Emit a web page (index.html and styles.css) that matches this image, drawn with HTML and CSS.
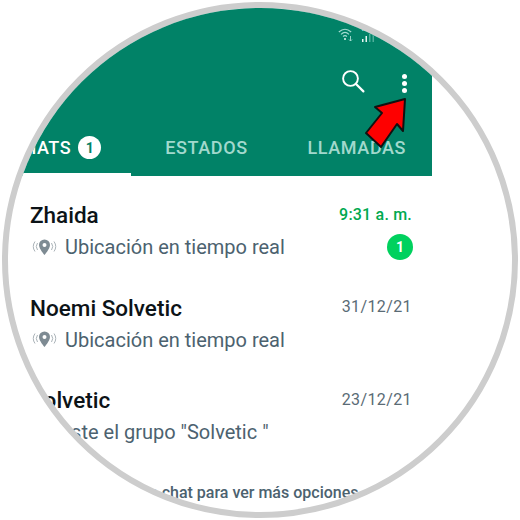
FILE: index.html
```html
<!DOCTYPE html>
<html lang="es">
<head>
<meta charset="utf-8">
<title>Chats</title>
<link rel="stylesheet" href="styles.css">
</head>
<body>
<main class="lens">
  <div class="screen">
    <header class="appbar">
      <div class="status">
        <svg class="wifi" width="18" height="16" viewBox="0 0 16 16" fill="none" stroke="#a5dcd2" stroke-width="1.1">
          <path d="M0.8 5 Q7 -0.5 13.2 5"/>
          <path d="M3 7.3 Q7 3.6 11 7.3"/>
          <path d="M5 9.5 Q7 7.8 9 9.5"/>
          <circle cx="7" cy="12" r="1" fill="#e6f5f2" stroke="none"/>
          <path d="M12.5 9v5M11 12.5l1.5 1.5 1.5-1.5" stroke-width="0.9"/>
        </svg>
        <div class="signal">
          <span class="roam">R</span>
          <svg width="14" height="10" viewBox="0 0 14 10">
            <rect x="0" y="7" width="1.5" height="3" fill="#e6f5f2"/>
            <rect x="3.5" y="4" width="1.5" height="6" fill="#e6f5f2"/>
            <rect x="7" y="2" width="1.5" height="8" fill="#4fae9b"/>
            <rect x="10.5" y="0" width="1.5" height="10" fill="#4fae9b"/>
          </svg>
        </div>
      </div>
      <div class="toolbar">
        <svg class="search" width="26" height="26" viewBox="0 0 26 26" fill="none" stroke="#fff" stroke-width="1.9" stroke-linecap="round">
          <circle cx="10.5" cy="10.5" r="7.4"/>
          <path d="M16 16l7.4 7.4" stroke-width="2.2"/>
        </svg>
        <div class="menu">
          <span class="dot"></span><span class="dot"></span><span class="dot"></span>
          <svg class="arrow" width="46" height="54" viewBox="0 0 46 54">
            <path d="M41 2 L11 10 L18 16 L2 36 L17 50 L33 27 L39 34 Z" fill="#fe0000" stroke="#111" stroke-width="2" stroke-linejoin="round"/>
          </svg>
        </div>
      </div>
      <nav class="tabs">
        <div class="tab tab-active">CHATS <span class="tab-count">1</span></div>
        <div class="tab">ESTADOS</div>
        <div class="tab">LLAMADAS</div>
      </nav>
    </header>

    <section class="chat">
      <div class="chat-line">
        <span class="name">Zhaida</span>
        <span class="time time-new">9:31 a. m.</span>
      </div>
      <div class="chat-line">
        <span class="preview">
          <svg class="live" width="27" height="18" viewBox="0 0 27 18" fill="none" stroke="#aab3b8" stroke-width="1">
            <path d="M4 3.5 Q0.5 8.5 4 13.5"/>
            <path d="M6.5 5 Q4 8.5 6.5 12"/>
            <path d="M20.5 5 Q23 8.5 20.5 12"/>
            <path d="M23 3.5 Q26.5 8.5 23 13.5"/>
            <path fill="#7e8b93" stroke="none" fill-rule="evenodd" d="M13.5 1.5a5.5 5.5 0 0 1 5.5 5.5c0 3.8-5.5 10-5.5 10S8 10.800 8 7a5.500 5.500 0 0 1 5.500-5.500zm0 3.500a2 2 0 1 0 0 4 2 2 0 0 0 0-4z"/>
          </svg>
          Ubicación en tiempo real
        </span>
        <span class="unread">1</span>
      </div>
    </section>

    <section class="chat">
      <div class="chat-line">
        <span class="name">Noemi Solvetic</span>
        <span class="time">31/12/21</span>
      </div>
      <div class="chat-line">
        <span class="preview">
          <svg class="live" width="27" height="18" viewBox="0 0 27 18" fill="none" stroke="#aab3b8" stroke-width="1">
            <path d="M4 3.5 Q0.5 8.5 4 13.5"/>
            <path d="M6.5 5 Q4 8.5 6.5 12"/>
            <path d="M20.5 5 Q23 8.5 20.5 12"/>
            <path d="M23 3.5 Q26.5 8.5 23 13.5"/>
            <path fill="#7e8b93" stroke="none" fill-rule="evenodd" d="M13.5 1.5a5.5 5.5 0 0 1 5.5 5.5c0 3.8-5.5 10-5.5 10S8 10.800 8 7a5.500 5.500 0 0 1 5.500-5.500zm0 3.500a2 2 0 1 0 0 4 2 2 0 0 0 0-4z"/>
          </svg>
          Ubicación en tiempo real
        </span>
      </div>
    </section>

    <section class="chat">
      <div class="chat-line">
        <span class="name">Solvetic</span>
        <span class="time">23/12/21</span>
      </div>
      <div class="chat-line">
        <span class="preview">Creaste el grupo "Solvetic "</span>
      </div>
    </section>

    <footer class="hint">Mantén presionado un chat para ver más opciones</footer>
  </div>
</main>
</body>
</html>
```
FILE: styles.css
```css
* { box-sizing: border-box; }
html, body { margin: 0; background: #fff; }
body { width: 520px; height: 520px; padding: 2px; font-family: Roboto, "Liberation Sans", sans-serif; }

.lens {
  width: 516px;
  height: 516px;
  border: 6px solid #cdcdcd;
  border-radius: 50%;
  overflow: hidden;
  background: #fff;
}
.screen { width: 451px; margin-left: -27px; margin-top: -8px; }

.appbar { background: #018267; height: 176px; display: flex; flex-direction: column; }
.status { height: 46px; padding: 27px 56px 0 0; display: flex; justify-content: flex-end; gap: 7px; }
.signal { display: flex; flex-direction: column; width: 14px; margin-top: -1px; }
.roam { font-size: 6px; line-height: 6px; color: #e6f5f2; font-weight: 700; }
.toolbar { height: 78px; display: flex; justify-content: flex-end; align-items: flex-start; padding: 0 24px 0 0; gap: 36px; }
.search { margin-top: 22px; }
.menu { margin-top: 28px; width: 6px; display: flex; flex-direction: column; gap: 2px; position: relative; }
.dot { width: 5px; height: 5px; border-radius: 50%; background: #fff; }
.arrow { position: absolute; left: -38px; top: 23px; }

.tabs { flex: 1; display: flex; }
.tab {
  flex: 1;
  display: flex;
  align-items: center;
  justify-content: center;
  gap: 7px;
  font-size: 18px;
  font-weight: 500;
  letter-spacing: 0.6px;
  color: #a1d9cd;
  padding-bottom: 5px;
}
.tab-active { color: #fff; border-bottom: 3px solid #fff; padding-bottom: 2px; }
.tab-count {
  width: 23px;
  height: 23px;
  border-radius: 50%;
  background: #fff;
  color: #018267;
  font-size: 14px;
  font-weight: 700;
  letter-spacing: 0;
  display: flex;
  align-items: center;
  justify-content: center;
}

.chat { height: 92.500px; padding: 25px 20px 0 49px; }
.chat-line { display: flex; justify-content: space-between; align-items: center; }
.chat-line + .chat-line { margin-top: 3px; height: 30px; }
.name { font-size: 22.500px; line-height: 28px; font-weight: 500; color: #0c1317; }
.time { font-size: 16px; letter-spacing: 0.4px; color: #5a6b75; margin-top: -2px; }
.time-new { color: #00a94f; font-weight: 500; letter-spacing: 0.2px; }
.preview { font-size: 20px; color: #4c626f; display: flex; align-items: center; gap: 7px; white-space: nowrap; }
.live { margin-left: 1px; margin-top: -1px; }
.unread {
  width: 26px;
  height: 26px;
  margin-right: -1px;
  border-radius: 50%;
  background: #00d15e;
  color: #fff;
  font-size: 14px;
  font-weight: 700;
  display: flex;
  align-items: center;
  justify-content: center;
}

.hint {
  padding: 29px 57px 0 0;
  text-align: center;
  font-size: 16px;
  font-weight: 500;
  color: #4c626f;
  white-space: nowrap;
}
```
